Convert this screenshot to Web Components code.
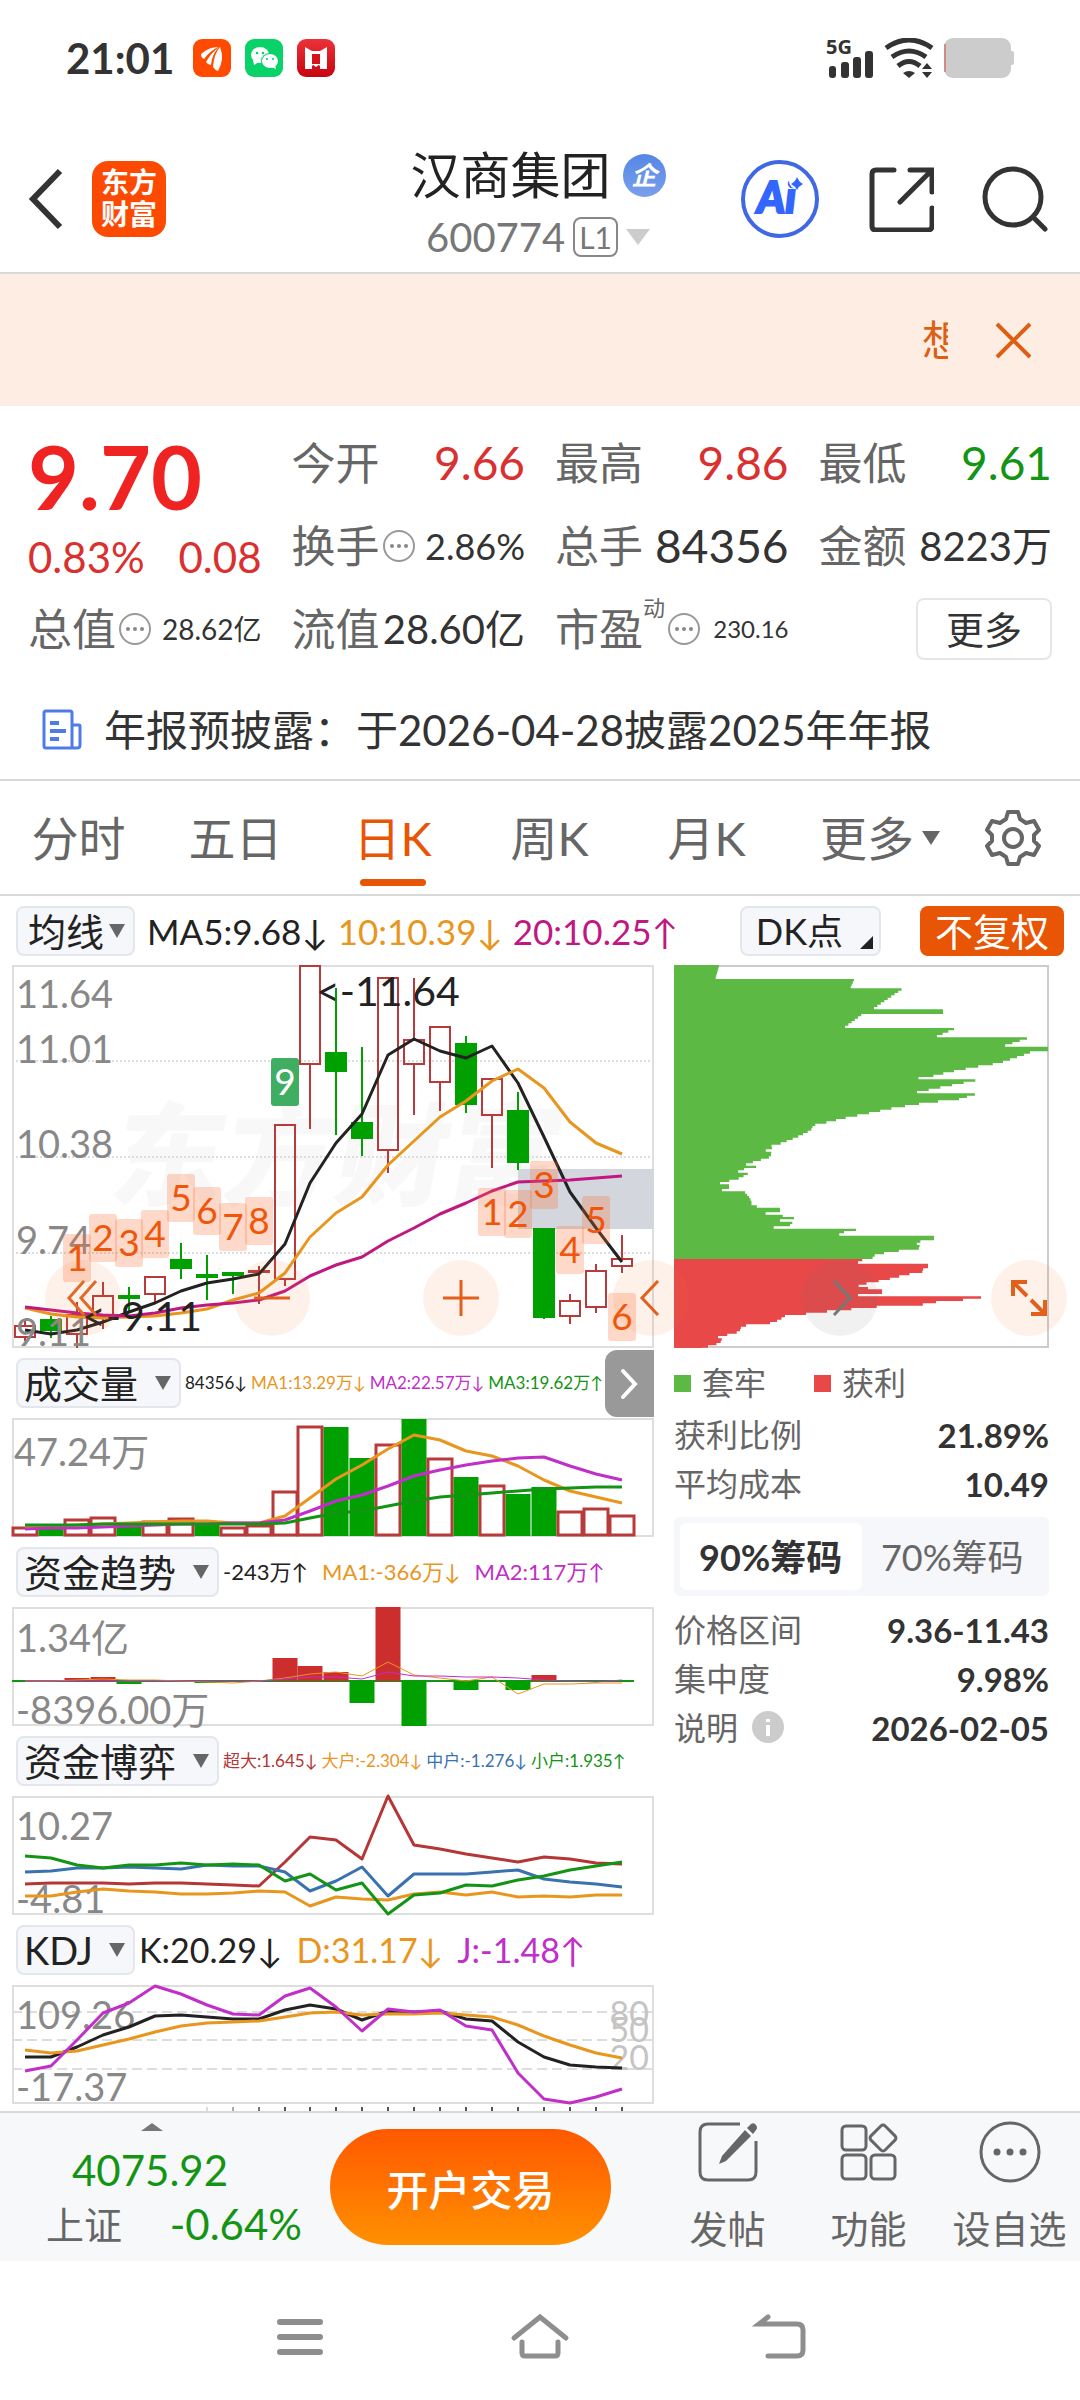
<!DOCTYPE html>
<html lang="zh-CN">
<head>
<meta charset="utf-8">
<meta name="viewport" content="width=device-width, initial-scale=1">
<title>汉商集团 600774</title>
<style>
:root {
    --font: Lato, "Liberation Sans", "Noto Sans CJK SC", sans-serif;
    --dark: #333;
    --ink: #222;
    --gray: #666;
    --line: #d9d9d9;
    --pane: #f6f7fa;
    --red: #d93030;
    --green: #149414;
    --orange: #e85505;
    --ma-orange: #e8961e;
    --ma-pink: #c01882;
    --ma-purple: #c02fc8;
}

body {
    margin: 0;
    background: #fff;
    color: var(--dark);
    font-family: var(--font);
}
</style>
</head>
<body>
<stock-page></stock-page>

<script>
const BASE = `
<style>
* { box-sizing: border-box; margin: 0; padding: 0; }
:host { display: block; }
button, select { font: inherit; color: inherit; background: none; border: 0; border-radius: 0; white-space: nowrap; }
a { color: inherit; text-decoration: none; }
svg { display: block; flex: none; }
</style>`;

class Unit extends HTMLElement {
    constructor() {
        super();
        this.attachShadow({ mode: 'open' });
        const template = document.createElement('template');
        template.innerHTML = BASE + this.constructor.html;
        this.shadowRoot.appendChild(template.content.cloneNode(true));
    }
}

/* ---------- status bar ---------- */
class StatusBar extends Unit {
    static html = `
<style>
:host { height: 116px; }
.bar { display: flex; height: 100%; align-items: center; padding: 0 66px; gap: 14px; }
.time { font-size: 42px; font-weight: 700; line-height: 48px; margin-right: 5px; }
.right { margin-left: auto; display: flex; gap: 10px; }
</style>
<div class="bar">
    <span class="time">21:01</span>
    <svg width="38" height="38" viewBox="0 0 38 38"><rect width="38" height="38" rx="9" fill="#ff4a00"/>
        <g fill="#fff"><path d="M8 15Q16 8 25 8Q17 12 11 20Q8 19 8 15z"/><path d="M26 8Q18 14 13 23Q15 26 18 26Q19 15 26 8z"/><path d="M27 8Q21 15 20 28Q22 31 25 32Q32 20 27 8z"/></g></svg>
    <svg width="38" height="38" viewBox="0 0 38 38"><rect width="38" height="38" rx="9" fill="#08d268"/>
        <g fill="#fff"><ellipse cx="15" cy="16" rx="9" ry="8"/><path d="M8 21l1 5 5-3z"/></g>
        <ellipse cx="25" cy="22" rx="9" ry="8" fill="#08d268"/><g fill="#fff"><ellipse cx="25" cy="22" rx="8" ry="7"/><path d="M30 26l1 4-5-2z"/></g>
        <g fill="#08d268"><circle cx="12" cy="14" r="1.3"/><circle cx="18" cy="14" r="1.3"/><circle cx="22" cy="20" r="1.1"/><circle cx="28" cy="20" r="1.1"/></g></svg>
    <svg width="38" height="38" viewBox="0 0 38 38"><defs><linearGradient id="r" x2="0" y2="1"><stop stop-color="#ec3238"/><stop offset="1" stop-color="#c70411"/></linearGradient></defs>
        <rect width="38" height="38" rx="9" fill="url(#r)"/>
        <path d="M8 8l7 4 2 3v10l-2 2v3H8zM30 8l-7 4-2 3v10l2 2v3h7z" fill="#fff"/><path d="M15 12h8v3h-8zM15 25h8l-4 3z" fill="#fff"/><path d="M15 15h8v10h-8z" fill="#d4141d"/></svg>
    <div class="right">
        <svg width="48" height="40" viewBox="0 0 48 40" overflow="visible"><text x="0" y="16" font-size="20" font-weight="700" font-family="Noto Sans, sans-serif" fill="#333">5G</text>
            <g fill="#333"><rect x="3" y="28" width="7" height="12" rx="3"/><rect x="15" y="24" width="8" height="16" rx="3"/><rect x="27" y="19" width="8" height="21" rx="3"/><rect x="39" y="13" width="8" height="27" rx="3"/></g></svg>
        <svg width="50" height="40" viewBox="0 0 50 40"><g fill="none" stroke="#333" stroke-width="5"><path d="M2 10Q25-6 48 10"/><path d="M8 19Q25 7 42 19"/><path d="M14 28Q25 19 36 28"/></g>
            <path d="M19 35q6-4 12 0l-6 5z" fill="#333"/><path d="M38 31l5-6 5 6zM38 34h10l-5 6z" fill="#333"/></svg>
        <svg width="70" height="40" viewBox="0 0 70 40"><rect width="67" height="40" rx="9" fill="#ccc"/><rect x="66" y="13" width="4" height="14" rx="2" fill="#ccc"/><path d="M1 6v28" stroke="#d64a3c"/></svg>
    </div>
</div>`;
}
customElements.define('status-bar', StatusBar);

/* ---------- header ---------- */
class StockHeader extends Unit {
    static html = `
<style>
:host { height: 158px; border-bottom: 2px solid var(--line); }
header { display: grid; grid-template-columns: 1fr auto 1fr; align-items: center; height: 100%; padding: 10px 32px 0 28px; }
.left, .right { display: flex; align-items: center; }
.left { gap: 28px; }
.right { justify-content: flex-end; gap: 48px; }
.logo { width: 74px; height: 76px; border-radius: 16px; background: #fd4a02; color: #fff; font-size: 28px; font-weight: 700; line-height: 32px; text-align: center; padding-top: 5px; }
.title { padding-top: 8px; }
h1 { display: flex; gap: 12px; font-size: 50px; font-weight: 400; line-height: 68px; color: var(--ink); align-items: center; }
.corp { width: 43px; height: 43px; border-radius: 50%; background: linear-gradient(#5586e6, #7aa0ea); color: #fff; font-size: 26px; font-style: italic; font-weight: 700; line-height: 42px; text-align: center; }
.code { display: flex; align-items: center; justify-content: center; gap: 8px; font-size: 40px; line-height: 56px; color: #777; }
.level { font-size: 30px; line-height: 36px; border: 2px solid #888; border-radius: 8px; padding: 0 4px; }
</style>
<header>
    <div class="left">
        <button aria-label="返回"><svg width="36" height="64" viewBox="0 0 36 64"><path d="M32 4L5 32l27 28" fill="none" stroke="#333" stroke-width="6"/></svg></button>
        <a class="logo" href="#">东方<br>财富</a>
    </div>
    <div class="title">
        <h1>汉商集团<span class="corp">企</span></h1>
        <div class="code">600774<span class="level">L1</span><svg width="24" height="16" viewBox="0 0 24 16"><path d="M0 0h24L12 16z" fill="#ccc"/></svg></div>
    </div>
    <div class="right">
        <button aria-label="智能助手"><svg width="80" height="80" viewBox="0 0 80 80"><circle cx="40" cy="40" r="37" fill="#fff" stroke="#4068e4" stroke-width="4"/>
            <text x="17" y="54" font-size="43" font-weight="900" font-style="italic" fill="#3366ff" stroke="#3366ff" stroke-width="2">Ai</text><circle cx="57" cy="22" r="8" fill="#fff"/><path d="M57 18q2 5 6 7q-4 2-6 6q-2-4-6-6q4-2 6-7z" fill="#3366ff"/></svg></button>
        <button aria-label="分享"><svg width="66" height="66" viewBox="0 0 66 66"><g fill="none" stroke="#333" stroke-width="5" stroke-linecap="round"><path d="M26 4H8Q4 4 4 8v52q0 4 4 4h52q4 0 4-4V42M42 4h22v22M62 6L32 36"/></g></svg></button>
        <button aria-label="搜索"><svg width="66" height="66" viewBox="0 0 66 66"><g fill="none" stroke="#333" stroke-width="5" stroke-linecap="round"><circle cx="31" cy="31" r="28"/><path d="M51 51l12 12"/></g></svg></button>
    </div>
</header>`;
}
customElements.define('stock-header', StockHeader);

/* ---------- scrolling tip ---------- */
class TipBanner extends Unit {
    static html = `
<style>
:host { background: #fdede3; color: #dc5f14; height: 132px; }
.tip { display: flex; align-items: center; height: 100%; padding: 0 48px; gap: 47px; }
.track { flex: 1; overflow: hidden; display: flex; justify-content: flex-end; font-size: 42px; line-height: 52px; }
.text { width: 26px; white-space: nowrap; }
</style>
<div class="tip">
    <div class="track"><div class="text">想</div></div>
    <button aria-label="关闭"><svg width="37" height="37" viewBox="0 0 37 37"><path d="M2 2l33 33M35 2L2 35" stroke="#dc5f14" stroke-width="4"/></svg></button>
</div>`;
}
customElements.define('tip-banner', TipBanner);

/* ---------- quote ---------- */
class QuoteItem extends Unit {
    static html = `
<style>
:host { display: flex; align-items: center; height: 83px; white-space: nowrap; }
.label { font-size: 44px; line-height: 60px; color: var(--gray); }
.sup { align-self: flex-start; font-size: 22px; line-height: 30px; color: var(--gray); margin-top: 6px; }
.value { margin-left: auto; line-height: 60px; font-size: var(--size, 46px); }
:host([up]) .value { color: var(--red); }
:host([down]) .value { color: var(--green); }
svg { display: none; margin-left: 2px; }
:host([hint]) svg { display: block; }
</style>
<span class="label"></span><span class="sup"></span>
<svg width="34" height="34" viewBox="0 0 34 34"><circle cx="17" cy="17" r="15" fill="none" stroke="#999" stroke-width="2"/><g fill="#888"><circle cx="10" cy="17" r="2"/><circle cx="17" cy="17" r="2"/><circle cx="24" cy="17" r="2"/></g></svg>
<span class="value"><slot></slot></span>`;
    connectedCallback() {
        this.shadowRoot.querySelector('.label').textContent = this.getAttribute('label');
        this.shadowRoot.querySelector('.sup').textContent = this.getAttribute('sup') || '';
    }
}
customElements.define('quote-item', QuoteItem);

class QuotePanel extends Unit {
    static html = `
<style>
.grid { display: grid; grid-template-columns: repeat(4, minmax(0, 1fr)); grid-auto-rows: 83px; column-gap: 30px; padding: 15px 28px 0; }
.now { grid-row: span 2; padding-top: 10px; color: var(--red); }
.price { font-size: 88px; line-height: 90px; font-weight: 700; color: #f02323; }
.change { display: flex; justify-content: space-between; font-size: 42px; line-height: 72px; }
.more { justify-self: end; align-self: center; width: 136px; height: 62px; border: 2px solid #e6e6e6; border-radius: 8px; font-size: 38px; line-height: 54px; }
.s40 { --size: 40px; } .s36 { --size: 36px; } .s28 { --size: 28px; } .s24 { --size: 24px; }
.news { display: flex; align-items: center; gap: 22px; height: 111px; padding: 10px 42px 0; font-size: 42px; line-height: 60px; border-bottom: 2px solid var(--line); white-space: nowrap; }
</style>
<div class="grid">
    <div class="now"><div class="price">9.70</div><div class="change"><span>0.83%</span><span>0.08</span></div></div>
    <quote-item label="今开" up>9.66</quote-item>
    <quote-item label="最高" up>9.86</quote-item>
    <quote-item label="最低" down>9.61</quote-item>
    <quote-item class="s36" label="换手" hint>2.86%</quote-item>
    <quote-item label="总手">84356</quote-item>
    <quote-item class="s40" label="金额">8223万</quote-item>
    <quote-item class="s28" label="总值" hint>28.62亿</quote-item>
    <quote-item class="s40" label="流值">28.60亿</quote-item>
    <quote-item class="s24" label="市盈" sup="动" hint>230.16</quote-item>
    <button class="more">更多</button>
</div>
<a class="news" href="#">
    <svg width="40" height="42" viewBox="0 0 40 42"><g fill="none" stroke="#4f7be6" stroke-width="3"><path d="M30 39H4q-2 0-2-2V4q0-2 2-2h24q2 0 2 2zM30 16h7q1 0 1 1v19q0 3-3 3h-5"/></g><path d="M8 14h9M8 22h16M8 30h9" stroke="#4f7be6" stroke-width="4"/></svg>
    <span>年报预披露：于2026-04-28披露2025年年报</span>
</a>`;
}
customElements.define('quote-panel', QuotePanel);

/* ---------- period tabs ---------- */
class PeriodTabs extends Unit {
    static html = `
<style>
:host { height: 115px; border-bottom: 2px solid var(--line); }
nav { display: grid; grid-template-columns: repeat(5, 157fr) 190fr 76fr 29fr; height: 100%; }
button { position: relative; font-size: 47px; line-height: 60px; color: var(--gray); display: flex; align-items: center; justify-content: center; gap: 8px; }
.on { color: var(--orange); }
.on::after { content: ""; position: absolute; left: 50%; bottom: 8px; width: 66px; height: 7px; margin-left: -33px; border-radius: 4px; background: var(--orange); }
</style>
<nav>
    <button>分时</button><button>五日</button><button class="on">日K</button><button>周K</button><button>月K</button>
    <button>更多<svg width="18" height="14" viewBox="0 0 18 14"><path d="M0 0h18L9 14z" fill="#666"/></svg></button>
    <button aria-label="设置"><svg width="58" height="58" viewBox="0 0 58 58"><g fill="none" stroke="#666" stroke-width="4" stroke-linejoin="round"><path d="M24 3h10l2 7 6 4 8-2 5 9-5 5v6l5 5-5 9-8-2-6 4-2 7H24l-2-7-6-4-8 2-5-9 5-5v-6l-5-5 5-9 8 2 6-4z"/><circle cx="29" cy="29" r="9"/></g></svg></button>
</nav>`;
}
customElements.define('period-tabs', PeriodTabs);

/* ---------- indicator drop-down ---------- */
class IndicatorSelect extends Unit {
    static observedAttributes = ['name'];
    static html = `
<style>
:host { display: block; flex: none; position: relative; color: var(--ink); }
select { display: block; appearance: none; height: 50px; padding: 0 40px 0 6px; border: 2px solid #e3e6ec; border-radius: 8px; background: var(--pane); font-size: 38px; line-height: 46px; }
:host([tight]) select { padding: 0 28px 0 10px; }
svg { position: absolute; right: 10px; top: 18px; pointer-events: none; }
</style>
<select></select>
<svg width="16" height="14" viewBox="0 0 16 14"><path d="M0 0h16L8 14z" fill="#666"/></svg>`;
    attributeChangedCallback(attr, old, name) {
        const select = this.shadowRoot.querySelector('select');
        select.setAttribute('aria-label', name);
        select.replaceChildren(new Option(name));
    }
}
customElements.define('indicator-select', IndicatorSelect);

/* ---------- one indicator with its own plot ---------- */
class IndicatorPane extends Unit {
    static html = `
<style>
.head { display: flex; align-items: center; height: 70px; padding-left: 4px; gap: 4px; white-space: nowrap; }
.legend { display: flex; font-size: var(--size); line-height: 40px; gap: var(--gap); }
</style>
<div class="head"><indicator-select></indicator-select><div class="legend"><slot name="legend"></slot></div></div>
<slot></slot>`;
    connectedCallback() {
        this.shadowRoot.querySelector('indicator-select').setAttribute('name', this.getAttribute('name'));
    }
}

/* ---------- charts ---------- */
const STEP = 25.95;
const cx = (i) => Math.round(13 + i * STEP);
const polyline = (ys, color, width = 3) =>
    `<polyline fill="none" stroke="${color}" stroke-width="${width}" stroke-linejoin="round" points="${ys.map((y, i) => `${cx(i)},${y}`).join(' ')}"/>`;
const axis = (text, y, x = 4) => `<text class="axis" x="${x}" y="${y}">${text}</text>`;

class PlotUnit extends Unit {
    static height = 119;
    static html = `
<style>
svg { width: 100%; overflow: visible; }
.axis { font-size: 38px; fill: #888; }
.note { font-size: 41px; fill: #222; }
.level { font-size: 34px; fill: #c4c4c4; text-anchor: end; }
.mark { font-size: 37px; text-anchor: middle; fill: #f0560a; }
.water { font-size: 112px; font-weight: 900; fill: #f8f8f8; }
</style>
<div class="plot"></div>`;
    connectedCallback() {
        const h = this.constructor.height;
        this.shadowRoot.querySelector('.plot').innerHTML =
            `<svg viewBox="0 0 642 ${h}"><rect x="1" y="1" width="640" height="${h - 2}" fill="#fff" stroke="#dedede" stroke-width="2"/>${this.draw()}</svg>`;
    }
}

class CandlePlot extends PlotUnit {
    static height = 383;
    draw() {
        // side, high, body top, body bottom, low
        const candles = [
            ['r', 354, 361, 372, 376], ['g', 351, 355, 365, 373], ['r', 337, 350, 369, 383], ['r', 317, 331, 352, 364],
            ['g', 322, 331, 333, 347], ['r', 312, 312, 329, 337], ['g', 278, 295, 303, 314], ['g', 290, 310, 312, 335],
            ['g', 307, 308, 310, 329], ['r', 301, 306, 307, 339], ['r', 160, 160, 314, 321], ['r', 1, 1, 99, 164],
            ['g', 23, 88, 106, 170], ['g', 82, 158, 173, 191], ['r', 13, 13, 185, 208], ['r', 13, 75, 99, 150],
            ['r', 62, 62, 117, 146], ['g', 71, 79, 139, 148], ['r', 114, 114, 150, 203], ['g', 127, 146, 197, 205],
            ['g', 264, 264, 352, 354], ['r', 329, 336, 351, 359], ['r', 299, 306, 342, 348], ['r', 270, 294, 301, 308]
        ];
        const ma5 = [365, 369, 365, 357, 347, 338, 326, 318, 314, 309, 279, 218, 178, 149, 90, 74, 86, 93, 81, 118, 172, 227, 263, 297];
        const ma10 = [343, 349, 352, 353, 352, 351, 348, 344, 335, 328, 308, 272, 248, 232, 200, 176, 152, 136, 116, 104, 123, 157, 178, 189];
        const ma20 = [342, 345, 348, 350, 351, 348, 343, 340, 338, 335, 326, 311, 300, 292, 276, 263, 249, 238, 226, 217, 216, 215, 213, 211];
        const marks = [[2, 269, 1], [3, 249, 2], [4, 254, 3], [5, 245, 4], [6, 209, 5], [7, 222, 6], [8, 238, 7], [9, 232, 8],
            [18, 223, 1], [19, 225, 2], [20, 196, 3], [21, 261, 4], [22, 231, 5], [23, 328, 6]];
        return `
            <g transform="skewX(-10)"><text class="water" x="136" y="232">东方财富</text></g>
            <path d="M0 96h642M0 192h642M0 288h642" stroke="#ddd" stroke-width="2" stroke-dasharray="2 2"/>
            <rect x="506" y="204" width="136" height="60" fill="#d3d6dc"/>
            ${candles.map(([side, high, top, bottom, low], i) => {
                const color = side === 'r' ? '#b93a3a' : '#00a000';
                return `<path d="M${cx(i)} ${high}V${top}M${cx(i)} ${bottom}V${low}" stroke="${color}" stroke-width="2"/>
                <rect x="${cx(i) - 10}" y="${top}" width="20" height="${bottom - top}" fill="${side === 'r' ? 'none' : color}" stroke="${color}" stroke-width="2"/>`;
            }).join('')}
            ${polyline(ma5, '#222')}${polyline(ma10, '#e8961e')}${polyline(ma20, '#c01882')}
            ${axis('11.64', 43)}${axis('11.01', 98)}${axis('10.38', 193)}${axis('9.74', 289)}${axis('9.11', 381)}
            ${marks.map(([i, y, n]) => `<rect x="${cx(i) - 14}" y="${y}" width="28" height="48" rx="3" fill="#fa6e32" fill-opacity=".27"/><text class="mark" x="${cx(i)}" y="${y + 37}">${n}</text>`).join('')}
            <rect x="${cx(10) - 14}" y="93" width="28" height="48" rx="3" fill="#3fae63"/><text class="mark" x="${cx(10)}" y="130" style="fill:#fff">9</text>
            <text class="note" x="304" y="41">&lt;-11.64</text>
            <text class="note" x="70" y="366">&lt;-9.11</text>`;
    }
}

class VolumePlot extends PlotUnit {
    draw() {
        const tops = [110, 107, 102, 100, 107, 104, 101, 107, 110, 108, 74, 9, 9, 40, 27, 1, 41, 59, 68, 76, 69, 94, 91, 98];
        const sides = 'rgrrgrrgrrrrggrgrgrggrrr';
        const ma1 = [109, 108, 107, 106, 105, 104, 103, 103, 105, 105, 98, 80, 61, 47, 31, 17, 22, 33, 38, 48, 62, 73, 79, 85];
        const ma2 = [111, 110, 110, 109, 108, 107, 106, 106, 105, 105, 102, 93, 83, 77, 68, 58, 52, 47, 43, 40, 39, 48, 56, 62];
        const ma3 = [107, 107, 107, 106, 106, 106, 106, 106, 106, 106, 105, 100, 95, 93, 88, 83, 79, 77, 75, 73, 71, 70, 69, 69];
        return tops.map((y, i) => sides[i] === 'r'
            ? `<rect x="${cx(i) - 12}" y="${y}" width="24" height="${117 - y}" fill="#fff" stroke="#b93a3a" stroke-width="3"/>`
            : `<rect x="${cx(i) - 12.5}" y="${y}" width="25" height="${118 - y}" fill="#00a000"/>`).join('') +
            polyline(ma1, '#e8961e') + polyline(ma2, '#c02fc8') + polyline(ma3, '#149414') + axis('47.24万', 48, 2);
    }
}

class TrendPlot extends PlotUnit {
    draw() {
        const ends = [74, 74, 71, 70, 77, 74, 75, 76, 74, 74, 51, 59, 65, 96, 0, 119, 74, 83, 74, 83, 68, 75, 75, 74];
        const ma1 = [74, 74, 73, 72, 73, 73, 74, 75, 76, 74, 71, 67, 65, 69, 55, 68, 71, 74, 70, 87, 77, 77, 76, 76];
        const ma2 = [74, 74, 74, 74, 74, 74, 74, 74, 74, 74, 72, 70, 70, 72, 65, 69, 69, 70, 70, 71, 73, 74, 75, 73];
        return `<path d="M0 74h622" stroke="#149414" stroke-width="2"/>` +
            ends.map((y, i) => `<rect x="${cx(i) - 12.5}" y="${Math.min(y, 74)}" width="25" height="${Math.abs(y - 74)}" fill="${y < 74 ? '#cc2d2d' : '#00a000'}"/>`).join('') +
            polyline(ma1, '#e8961e', 1) + polyline(ma2, '#c02fc8', 1) + axis('1.34亿', 45) + axis('-8396.00万', 117);
    }
}

class GamePlot extends PlotUnit {
    draw() {
        const huge = [88, 87, 87, 87, 88, 87, 87, 88, 89, 90, 66, 41, 44, 63, 0, 49, 53, 58, 62, 66, 61, 63, 67, 68];
        const big = [100, 100, 96, 93, 95, 96, 98, 98, 97, 95, 96, 110, 101, 103, 104, 98, 96, 99, 96, 101, 100, 101, 99, 99];
        const mid = [76, 75, 72, 72, 71, 72, 73, 69, 70, 70, 76, 95, 85, 71, 100, 78, 78, 78, 76, 74, 83, 86, 88, 91];
        const small = [60, 62, 69, 72, 69, 69, 67, 69, 68, 69, 85, 78, 94, 87, 118, 99, 97, 89, 90, 84, 80, 74, 70, 66];
        return axis('10.27', 44) + axis('-4.81', 117) +
            polyline(huge, '#b43636') + polyline(big, '#e8961e') + polyline(mid, '#3a72b0') + polyline(small, '#149414');
    }
}

class KdjPlot extends PlotUnit {
    draw() {
        const k = [72, 72, 62, 50, 42, 31, 30, 32, 34, 34, 25, 20, 24, 35, 26, 27, 26, 34, 36, 57, 72, 80, 82, 83];
        const d = [65, 68, 66, 60, 54, 47, 41, 38, 37, 36, 32, 28, 27, 30, 29, 29, 28, 30, 32, 40, 51, 60, 68, 73];
        const j = [86, 81, 55, 28, 18, 1, 9, 20, 29, 30, 11, 3, 22, 46, 24, 27, 25, 41, 45, 88, 114, 118, 112, 104];
        return `<path d="M0 27h642M0 55h642M0 84h642" stroke="#ddd" stroke-width="2" stroke-dasharray="10 5"/>
            <text class="level" x="637" y="41">80</text><text class="level" x="637" y="57">50</text><text class="level" x="637" y="85">20</text>` +
            axis('109.26', 44) + axis('-17.37', 116) + polyline(k, '#222') + polyline(d, '#e8961e') + polyline(j, '#c02fc8') +
            Array.from({ length: 17 }, (_, n) => `<path d="M${cx(n + 7)} 122v4" stroke="#555" stroke-width="2" stroke-opacity="${Math.min(1, .2 + n * .3)}"/>`).join('');
    }
}

/* ---------- cost distribution ---------- */
class ChipPlot extends PlotUnit {
    connectedCallback() {
        // price level, width of the bar
        const knots = [[0, 3], [1, 3], [1, 45], [15, 41], [15, 180], [19, 178], [24, 176], [24, 228], [45, 197], [45, 269], [48, 269], [48, 190], [64, 168],
            [64, 280], [73, 258], [73, 354], [82, 326], [82, 374], [85, 374], [85, 362], [90, 349], [98, 325], [102, 300], [107, 275], [111, 258], [115, 231],
            [115, 303], [129, 233], [129, 302], [134, 285], [138, 249], [143, 219], [148, 195], [153, 170], [157, 154], [161, 135], [161, 139], [165, 137],
            [172, 123], [179, 105], [181, 96], [181, 100], [184, 97], [185, 91], [188, 98], [192, 96], [199, 72], [201, 72], [201, 82], [204, 82], [204, 70],
            [208, 60], [208, 75], [213, 66], [219, 42], [220, 42], [220, 55], [224, 55], [224, 48], [226, 48], [226, 70], [233, 76], [238, 78], [238, 70],
            [240, 85], [243, 80], [243, 106], [247, 106], [247, 96], [250, 86], [251, 120], [254, 120], [254, 106], [256, 106], [256, 120], [260, 116], [264, 88],
            [264, 182], [267, 182], [267, 170], [271, 162], [271, 260], [274, 260], [275, 250], [278, 242], [283, 248], [285, 229], [288, 210], [291, 198], [294, 199],
            [294, 189], [297, 187], [299, 169], [299, 254], [302, 254], [302, 245], [306, 252], [310, 230], [313, 219], [318, 195], [320, 180], [322, 194],
            [325, 194], [325, 208], [328, 208], [328, 184], [330, 184], [330, 307], [333, 307], [333, 289], [336, 289], [337, 262], [340, 245], [341, 210],
            [343, 188], [346, 156], [348, 138], [351, 111], [355, 105], [359, 93], [359, 75], [364, 64], [366, 68], [369, 56], [373, 40], [374, 48], [378, 46], [383, 28]];
        const widthAt = (y) => {
            for (let n = knots.length - 1; n > 0; n--) {
                const [y0, w0] = knots[n - 1], [y1, w1] = knots[n];
                if (y >= y0) return y1 === y0 ? w1 : w0 + (w1 - w0) * Math.min(1, (y - y0) / (y1 - y0));
            }
        };
        const area = (from, to, color) => {
            let d = `M0 ${from}`;
            for (let y = from; y < to; y += 7 / 3) d += `H${widthAt(y + 1).toFixed(1)}V${Math.min(to, y + 7 / 3).toFixed(1)}`;
            return `<path d="${d}H0z" fill="${color}"/>`;
        };
        this.shadowRoot.querySelector('.plot').innerHTML =
            `<svg viewBox="0 0 375 383"><rect x="1" y="1" width="373" height="381" fill="#fff" stroke="#ccc" stroke-width="2"/>${area(0, 294, '#5bb944')}${area(294, 383, '#e84848')}</svg>`;
    }
}

/* ---------- right column ---------- */
class ChipPanel extends Unit {
    static html = `
<style>
:host { color: var(--gray); font-size: 32px; line-height: 48px; }
.legend { display: flex; gap: 48px; height: 62px; padding-top: 8px; }
.legend span { display: flex; align-items: center; gap: 11px; }
.legend span::before { content: ""; width: 17px; height: 17px; background: var(--c); }
.stat { display: flex; justify-content: space-between; align-items: center; height: 49px; }
dt { display: flex; align-items: center; gap: 14px; }
dd { color: var(--dark); font-weight: 700; font-size: 33px; }
.tabs { display: grid; grid-template-columns: 1fr 1fr; height: 79px; padding: 6px; margin: 9px 0; background: var(--pane); border-radius: 6px; }
.tabs button { font-size: 36px; border-radius: 6px; }
.tabs .on { background: #fff; color: var(--dark); font-weight: 700; }
</style>
<chip-plot></chip-plot>
<div class="legend"><span style="--c:#5bb944">套牢</span><span style="--c:#e84848">获利</span></div>
<dl>
    <div class="stat"><dt>获利比例</dt><dd>21.89%</dd></div>
    <div class="stat"><dt>平均成本</dt><dd>10.49</dd></div>
</dl>
<div class="tabs"><button class="on">90%筹码</button><button>70%筹码</button></div>
<dl>
    <div class="stat"><dt>价格区间</dt><dd>9.36-11.43</dd></div>
    <div class="stat"><dt>集中度</dt><dd>9.98%</dd></div>
    <div class="stat"><dt>说明<svg width="33" height="33" viewBox="0 0 33 33"><circle cx="16" cy="16" r="16" fill="#ccc"/><path d="M16 14v11M16 8v3" stroke="#fff" stroke-width="4"/></svg></dt><dd>2026-02-05</dd></div>
</dl>`;
}

/* ---------- chart area ---------- */
class ChartBoard extends Unit {
    static html = `
<style>
.tools { display: flex; align-items: center; height: 69px; padding: 0 16px; white-space: nowrap; font-size: 35px; line-height: 46px; }
.ma { display: flex; gap: 10px; margin: 0 auto 0 12px; }
.dk { position: relative; height: 50px; padding: 0 36px 0 14px; border: 2px solid #e3e6ec; border-radius: 8px; background: var(--pane); font-size: 36px; line-height: 46px; color: var(--ink); }
.dk svg { position: absolute; right: 6px; bottom: 5px; }
.adjust { height: 50px; margin-left: 39px; padding: 0 15px; border-radius: 8px; background: var(--orange); color: #fff; font-size: 38px; line-height: 50px; }
.cols { position: relative; display: grid; grid-template-columns: 642fr 375fr; column-gap: 20px; padding: 0 31px 7px 12px; }
.float { position: absolute; top: 295px; left: 45px; right: 13px; display: flex; justify-content: space-between; }
.float button { width: 76px; height: 76px; border-radius: 50%; background: rgba(250, 120, 50, .1); display: flex; align-items: center; justify-content: center; }
.float .off { background: rgba(120, 120, 120, .1); }
.fold { position: absolute; top: 385px; left: 605px; width: 49px; height: 67px; border-radius: 12px 0 0 12px; background: #999; padding-left: 14px; }
.k { color: var(--ink); } .o { color: var(--ma-orange); } .p { color: var(--ma-purple); } .m { color: var(--ma-pink); }
.r { color: #b43636; } .b { color: #3a72b0; } .g { color: var(--green); }
.tiny { --size: 17px; --gap: 4px; }
.small { --size: 22px; --gap: 14px; }
.large { --size: 34px; --gap: 14px; }
</style>
<div class="tools">
    <indicator-select name="均线" tight></indicator-select>
    <div class="ma"><span class="k">MA5:9.68↓</span><span class="o">10:10.39↓</span><span class="m">20:10.25↑</span></div>
    <button class="dk">DK点<svg width="13" height="13" viewBox="0 0 13 13"><path d="M13 0v13H0z" fill="#222"/></svg></button>
    <button class="adjust">不复权</button>
</div>
<div class="cols">
    <div>
        <candle-plot></candle-plot>
        <indicator-pane class="tiny" name="成交量"><span slot="legend" class="k">84356↓</span><span slot="legend" class="o">MA1:13.29万↓</span><span slot="legend" class="p">MA2:22.57万↓</span><span slot="legend" class="g">MA3:19.62万↑</span><volume-plot></volume-plot></indicator-pane>
        <indicator-pane class="small" name="资金趋势"><span slot="legend" class="k">-243万↑</span><span slot="legend" class="o">MA1:-366万↓</span><span slot="legend" class="p">MA2:117万↑</span><trend-plot></trend-plot></indicator-pane>
        <indicator-pane class="tiny" name="资金博弈"><span slot="legend" class="r">超大:1.645↓</span><span slot="legend" class="o">大户:-2.304↓</span><span slot="legend" class="b">中户:-1.276↓</span><span slot="legend" class="g">小户:1.935↑</span><game-plot></game-plot></indicator-pane>
        <indicator-pane class="large" name="KDJ"><span slot="legend" class="k">K:20.29↓</span><span slot="legend" class="o">D:31.17↓</span><span slot="legend" class="p">J:-1.48↑</span><kdj-plot></kdj-plot></indicator-pane>
    </div>
    <chip-panel></chip-panel>
    <div class="float">
        <button aria-label="最早"><svg width="36" height="36" viewBox="0 0 36 36"><path d="M19 1L4 18l15 17M31 1L16 18l15 17" fill="none" stroke="#e06a28" stroke-width="3"/></svg></button>
        <button aria-label="缩小"><svg width="36" height="36" viewBox="0 0 36 36"><path d="M0 18h36" stroke="#e0601c" stroke-width="3"/></svg></button>
        <button aria-label="放大"><svg width="36" height="36" viewBox="0 0 36 36"><path d="M0 18h36M18 0v36" stroke="#e0601c" stroke-width="3"/></svg></button>
        <button aria-label="前移"><svg width="36" height="36" viewBox="0 0 36 36"><path d="M25 1L9 18l16 17" fill="none" stroke="#e0601c" stroke-width="3"/></svg></button>
        <button class="off" aria-label="后移"><svg width="36" height="36" viewBox="0 0 36 36"><path d="M12 1l16 17-16 17" fill="none" stroke="#777" stroke-width="3"/></svg></button>
        <button aria-label="全屏"><svg width="38" height="38" viewBox="0 0 38 38"><path d="M17 3H3v14M3 3l14 14M35 21v14H21M35 35L21 21" fill="none" stroke="#e0601c" stroke-width="4"/></svg></button>
    </div>
    <button class="fold" aria-label="收起"><svg width="20" height="32" viewBox="0 0 20 32"><path d="M4 3l12 13L4 29" fill="none" stroke="#fff" stroke-width="4" stroke-linecap="round"/></svg></button>
</div>`;
}

customElements.define('candle-plot', CandlePlot);
customElements.define('volume-plot', VolumePlot);
customElements.define('trend-plot', TrendPlot);
customElements.define('game-plot', GamePlot);
customElements.define('kdj-plot', KdjPlot);
customElements.define('chip-plot', ChipPlot);
customElements.define('indicator-pane', IndicatorPane);
customElements.define('chip-panel', ChipPanel);
customElements.define('chart-board', ChartBoard);

/* ---------- bottom ---------- */
class ActionBar extends Unit {
    static html = `
<style>
:host { border-top: 2px solid var(--line); background: #f7f8fa; }
.bar { display: grid; grid-template-columns: 330fr 281fr 46fr 141fr 141fr 141fr; height: 148px; align-items: center; white-space: nowrap; }
.index { display: grid; grid-template-columns: auto auto; justify-content: space-between; padding: 0 28px 0 46px; color: var(--green); font-size: 42px; line-height: 54px; }
.index svg { grid-column: span 2; margin: 0 0 12px 95px; }
.num { grid-column: span 2; padding-left: 26px; }
.name { color: var(--gray); font-size: 38px; }
.trade { height: 116px; border-radius: 58px; background: linear-gradient(#ff5800, #ff9000); color: #fff; font-size: 42px; font-weight: 500; }
.act { display: flex; flex-direction: column; align-items: center; gap: 20px; color: var(--gray); font-size: 38px; line-height: 50px; }
.first { grid-column: 4; }
</style>
<div class="bar">
    <a class="index" href="#"><svg width="22" height="8" viewBox="0 0 22 8"><path d="M0 8h22L11 0z" fill="#777"/></svg><span class="num">4075.92</span><span class="name">上证</span><span>-0.64%</span></a>
    <button class="trade">开户交易</button>
    <button class="act first"><svg width="62" height="62" viewBox="0 0 62 62"><path d="M43 3H11Q3 3 3 11v40q0 8 8 8h40q8 0 8-8V20" fill="none" stroke="#666" stroke-width="3"/><path d="M48 9l6 6-25 25-7 3 3-8zM50 7l4-4q3-2 5 1t0 5l-3 4z" fill="#666"/></svg>发帖</button>
    <button class="act"><svg width="62" height="62" viewBox="0 0 62 62"><g fill="none" stroke="#666" stroke-width="3"><rect x="4" y="5" width="24" height="24" rx="4"/><rect x="4" y="34" width="24" height="24" rx="4"/><rect x="33" y="34" width="24" height="24" rx="4"/><rect x="35" y="7" width="20" height="20" rx="3" transform="rotate(45 45 17)"/></g></svg>功能</button>
    <button class="act"><svg width="62" height="62" viewBox="0 0 62 62"><circle cx="31" cy="31" r="29" fill="none" stroke="#666" stroke-width="3"/><g fill="#666"><circle cx="18" cy="31" r="3.5"/><circle cx="31" cy="31" r="3.5"/><circle cx="44" cy="31" r="3.5"/></g></svg>设自选</button>
</div>`;
}
customElements.define('action-bar', ActionBar);

class SystemNav extends Unit {
    static html = `
<style>
nav { display: flex; justify-content: center; gap: 180px; padding: 46px 0 33px; }
</style>
<nav>
    <button aria-label="任务"><svg width="60" height="60" viewBox="0 0 60 60"><path d="M10 15h40M10 30h40M10 45h40" stroke="#8e8e8e" stroke-width="6" stroke-linecap="round"/></svg></button>
    <button aria-label="主页"><svg width="60" height="60" viewBox="0 0 60 60"><g fill="none" stroke="#8e8e8e" stroke-width="5" stroke-linecap="round"><path d="M4 31L30 10l26 21"/><path d="M12 35v11q0 3 3 3h30q3 0 3-3V35"/></g></svg></button>
    <button aria-label="后退"><svg width="60" height="60" viewBox="0 0 60 60"><g fill="none" stroke="#8e8e8e" stroke-width="5" stroke-linecap="round"><path d="M18 10L9 17h38q6 0 6 6v20q0 6-6 6H18"/></g></svg></button>
</nav>`;
}
customElements.define('system-nav', SystemNav);

class StockPage extends Unit {
    static html = `
<status-bar></status-bar>
<stock-header></stock-header>
<tip-banner></tip-banner>
<quote-panel></quote-panel>
<period-tabs></period-tabs>
<chart-board></chart-board>
<action-bar></action-bar>
<system-nav></system-nav>`;
}
customElements.define('stock-page', StockPage);
</script>
</body>
</html>
